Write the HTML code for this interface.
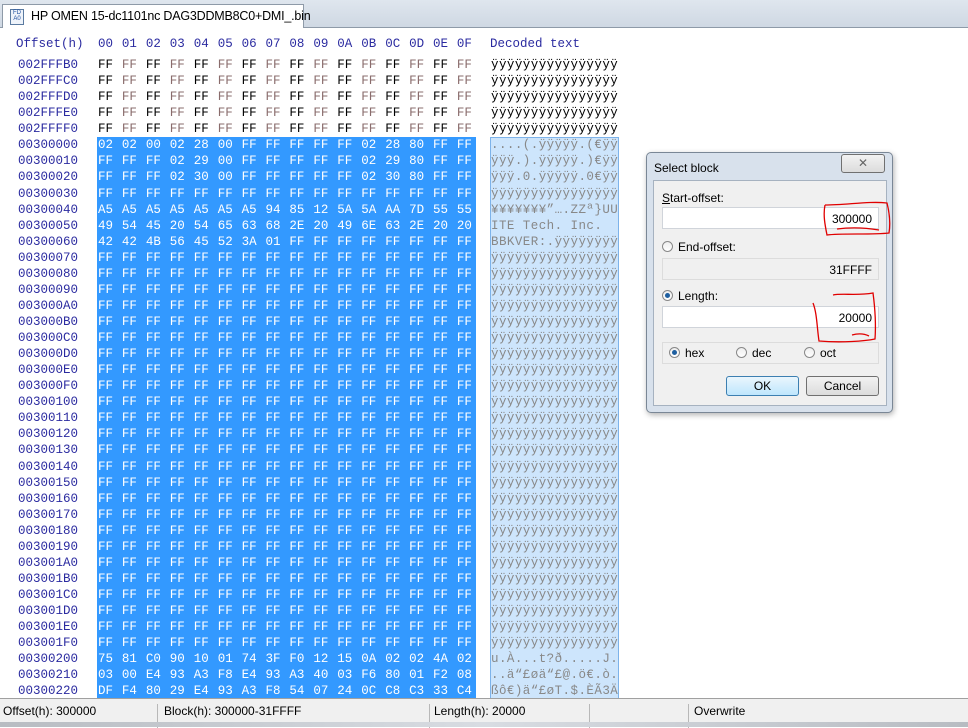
<!DOCTYPE html>
<html><head><meta charset="utf-8">
<style>
html,body{margin:0;padding:0;width:968px;height:727px;overflow:hidden;background:#fff;font-family:"Liberation Sans",sans-serif;}
.tabbar{position:absolute;left:0;top:0;width:968px;height:27px;background:linear-gradient(#dfe6ee,#cfd8e3);border-bottom:1px solid #8e9aa8;}
.tab{position:absolute;left:2px;top:4px;width:302px;height:24px;background:#fff;border:1px solid #8e9aa8;border-bottom:none;box-sizing:border-box;font-size:12.5px;color:#000;white-space:nowrap;}
.tab span{position:absolute;left:28px;top:4px;letter-spacing:-0.2px;}
.ico{position:absolute;left:7px;top:4px;width:12px;height:14px;border:1px solid #5a7aa0;background:#eef3fa;font-size:6px;line-height:6px;color:#2050a0;text-align:center;}
.m{position:absolute;font-family:"Liberation Mono",monospace;font-size:12.5px;white-space:pre;}
.sel{position:absolute;left:97px;top:137px;width:379px;height:562px;background:#3399ff;}
.dsel{position:absolute;left:490px;top:137px;width:127px;height:561px;background:#cde5fc;border:1px solid #7db3ea;}
.status{position:absolute;left:0;top:698px;width:968px;height:24px;background:#f0f0f0;border-top:1px solid #a0a0a0;font-size:12px;}
.status div{position:absolute;top:5px;}
.sep{position:absolute;top:0;width:1px;height:24px;background:#b8b8b8;}
.bot{position:absolute;left:0;top:722px;width:968px;height:5px;background:linear-gradient(90deg,#b8bcc2,#d8dce2,#b8bcc2);}
.dlg{position:absolute;left:646px;top:152px;width:247px;height:261px;background:#d8e1ec;border:1px solid #7a8796;border-radius:5px;box-sizing:border-box;box-shadow:1px 2px 6px rgba(0,0,0,.3);font-size:12px;}
.inner{position:absolute;left:6px;top:27px;width:234px;height:226px;background:#f0f0f0;border:1px solid #a6b2c0;box-sizing:border-box;}
.inp{position:absolute;left:8px;width:217px;height:22px;background:#fff;border:1px solid #d0d4da;box-sizing:border-box;text-align:right;padding:4px 6px 0 0;font-size:12px;}
.radio{position:absolute;width:11px;height:11px;border-radius:50%;border:1px solid #888;background:linear-gradient(#eee,#fff);box-sizing:border-box;}
.radio.on::after{content:"";position:absolute;left:2px;top:2px;width:5px;height:5px;border-radius:50%;background:#1e5fa0;}
.lbl{position:absolute;}
.btn{position:absolute;height:20px;border:1px solid #707070;border-radius:3px;background:linear-gradient(#f2f2f2,#dcdcdc);box-sizing:border-box;text-align:center;line-height:18px;}
</style></head><body>
<div class="tabbar"><div class="tab"><div class="ico">FD<br>A0</div><span>HP OMEN 15-dc1101nc DAG3DDMB8C0+DMI_.bin</span></div></div>
<div class="sel"></div><div class="dsel"></div>
<div id="hex"></div>
<div class="status">
<div style="left:3px">Offset(h): 300000</div><div class="sep" style="left:157px"></div>
<div style="left:164px">Block(h): 300000-31FFFF</div><div class="sep" style="left:429px"></div>
<div style="left:434px">Length(h): 20000</div><div class="sep" style="left:589px"></div><div class="sep" style="left:688px"></div>
<div style="left:694px">Overwrite</div></div>
<div class="bot"></div>
<div class="dlg">
<div class="lbl" style="left:7px;top:8px">Select block</div>
<div class="btn" style="left:194px;top:1px;width:44px;height:19px;line-height:16px;color:#666;font-size:12px">✕</div>
<div class="inner">
<div class="lbl" style="left:8px;top:10px"><u>S</u>tart-offset:</div>
<div class="inp" style="top:26px">300000</div>
<div class="radio" style="left:8px;top:60px"></div><div class="lbl" style="left:24px;top:59px">End-offset:</div>
<div class="inp" style="top:77px;background:#f0f0f0;border-color:#dcdcdc">31FFFF</div>
<div class="radio on" style="left:8px;top:109px"></div><div class="lbl" style="left:24px;top:108px">Length:</div>
<div class="inp" style="top:125px">20000</div>
<div style="position:absolute;left:8px;top:161px;width:217px;height:22px;border:1px solid #dcdcdc;box-sizing:border-box"></div>
<div class="radio on" style="left:15px;top:166px"></div><div class="lbl" style="left:31px;top:165px">hex</div>
<div class="radio" style="left:82px;top:166px"></div><div class="lbl" style="left:98px;top:165px">dec</div>
<div class="radio" style="left:150px;top:166px"></div><div class="lbl" style="left:166px;top:165px">oct</div>
<div class="btn" style="left:72px;top:195px;width:73px;border-color:#3c7fb1;background:linear-gradient(#eaf6fd,#bee6fd)">OK</div>
<div class="btn" style="left:152px;top:195px;width:73px">Cancel</div>
</div>
<svg style="position:absolute;left:0;top:0" width="247" height="261" fill="none" stroke="#e00000" stroke-width="1.3">
<path d="M178 52 C176 62 178 72 180 82 C195 80 225 82 242 80 C244 68 242 58 240 50 C222 48 200 52 178 52 M190 76 C205 74 220 75 232 77"/>
<path d="M166 150 C170 160 170 175 172 188 C195 190 218 188 228 186 C229 172 228 155 226 140 C210 143 195 140 186 142 M205 182 C212 180 218 181 222 183"/>
</svg>
</div>
<script>
var FF=[];for(var i=0;i<16;i++)FF.push("FF");
var pre=["002FFFB0","002FFFC0","002FFFD0","002FFFE0","002FFFF0"];
var data={
0:"02 02 00 02 28 00 FF FF FF FF FF 02 28 80 FF FF|....(.ÿÿÿÿÿ.(€ÿÿ",
1:"FF FF FF 02 29 00 FF FF FF FF FF 02 29 80 FF FF|ÿÿÿ.).ÿÿÿÿÿ.)€ÿÿ",
2:"FF FF FF 02 30 00 FF FF FF FF FF 02 30 80 FF FF|ÿÿÿ.0.ÿÿÿÿÿ.0€ÿÿ",
4:"A5 A5 A5 A5 A5 A5 A5 94 85 12 5A 5A AA 7D 55 55|¥¥¥¥¥¥¥”….ZZª}UU",
5:"49 54 45 20 54 65 63 68 2E 20 49 6E 63 2E 20 20|ITE Tech. Inc.  ",
6:"42 42 4B 56 45 52 3A 01 FF FF FF FF FF FF FF FF|BBKVER:.ÿÿÿÿÿÿÿÿ",
32:"75 81 C0 90 10 01 74 3F F0 12 15 0A 02 02 4A 02|u.À...t?ð.....J.",
33:"03 00 E4 93 A3 F8 E4 93 A3 40 03 F6 80 01 F2 08|..ä“£øä“£@.ö€.ò.",
34:"DF F4 80 29 E4 93 A3 F8 54 07 24 0C C8 C3 33 C4|ßô€)ä“£øT.$.ÈÃ3Ä"};
var h='<div class="m" style="left:16px;top:37px;color:#2b2ba0">Offset(h)</div>';
var cols=["00","01","02","03","04","05","06","07","08","09","0A","0B","0C","0D","0E","0F"];
for(var c=0;c<16;c++)h+='<div class="m" style="left:'+(98+c*23.93).toFixed(1)+'px;top:37px;color:#2b2ba0">'+cols[c]+'</div>';
h+='<div class="m" style="left:490px;top:37px;color:#2b2ba0">Decoded text</div>';
for(var r=0;r<40;r++){
 var y=(58+r*16.06).toFixed(1),off,b,t,sel=r>=5;
 if(r<5){off=pre[r];b=FF;t="ÿÿÿÿÿÿÿÿÿÿÿÿÿÿÿÿ";}
 else{var k=r-5;off=(0x300000+k*16).toString(16).toUpperCase();while(off.length<8)off="0"+off;
  if(data[k]){var p=data[k].split("|");b=p[0].split(" ");t=p[1];}else{b=FF;t="ÿÿÿÿÿÿÿÿÿÿÿÿÿÿÿÿ";}}
 h+='<div class="m" style="left:18px;top:'+y+'px;color:#2b2ba0">'+off+'</div>';
 for(var c=0;c<16;c++){var col=sel?"#fff":(c%2?"#8a6c6c":"#000");
  h+='<div class="m" style="left:'+(98+c*23.93).toFixed(1)+'px;top:'+y+'px;color:'+col+'">'+b[c]+'</div>';}
 h+='<div class="m" style="left:491px;top:'+y+'px;color:'+(sel?"#888":"#000")+';letter-spacing:0.45px">'+t.replace(/&/g,"&amp;")+'</div>';
}
document.getElementById("hex").innerHTML=h;
</script>
</body></html>
